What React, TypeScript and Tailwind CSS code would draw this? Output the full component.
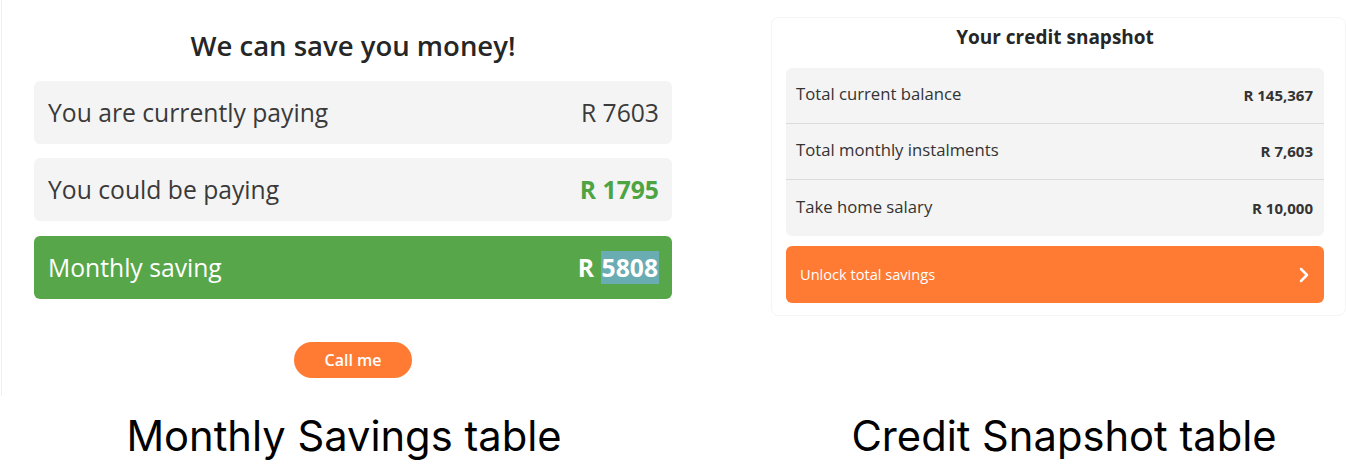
import { ChevronRight } from 'lucide-react';

const open = { fontFamily: '"Open Sans", "Liberation Sans", sans-serif' };
const inter = { fontFamily: 'Inter, "Liberation Sans", sans-serif' };

function SavingRow({ label, value, variant }: { label: string; value: React.ReactNode; variant: 'plain' | 'green' | 'total' }) {
  const box = variant === 'total' ? 'bg-[#58a64a] text-white' : 'bg-[#f4f4f4] text-[#3a3a3a]';
  return (
    <div className={`h-[63px] rounded-[6px] flex items-center justify-between pl-[14px] pr-[13px] text-[24.7px] ${box}`}>
      <span>{label}</span>
      <span className={variant === 'plain' ? '' : variant === 'green' ? 'font-bold text-[#4ea443]' : 'font-bold'}>{value}</span>
    </div>
  );
}

function SnapshotRow({ label, value, last }: { label: string; value: string; last?: boolean }) {
  return (
    <div className={`h-[56px] flex items-center justify-between pl-[10px] pr-[11px] ${last ? '' : 'border-b border-[#dcdcdc]'}`}>
      <span className="text-[16.7px] text-[#333] -mt-[3px]">{label}</span>
      <span className="text-[15px] font-bold text-[#333]">{value}</span>
    </div>
  );
}

export default function App() {
  return (
    <div className="w-[1346px] h-[464px] bg-white flex flex-col overflow-hidden" style={open}>
      <div className="flex items-start h-[396px] shrink-0">
        <div className="ml-[1px] w-[705px] h-[396px] border-l border-[#efefef] pl-[32px] pr-[34px] flex flex-col">
          <h2 className="mt-[28px] h-[36px] text-center text-[27.5px] leading-[36px] font-semibold text-[#262626]">We can save you money!</h2>
          <div className="mt-[17px] flex flex-col gap-[14px]">
            <SavingRow label="You are currently paying" value="R 7603" variant="plain" />
            <SavingRow label="You could be paying" value="R 1795" variant="green" />
            <div className="mt-[1px]">
              <SavingRow
                label="Monthly saving"
                variant="total"
                value={<>R <span className="bg-[#69adb3] px-[1px]">5808</span></>}
              />
            </div>
          </div>
          <div className="mt-[43px] flex justify-center">
            <button className="w-[118px] h-[36px] rounded-full bg-[#ff7b33] text-white text-[16px] font-semibold">Call me</button>
          </div>
        </div>
        <div className="ml-[65px] mt-[17px] w-[575px] h-[299px] rounded-[8px] border border-[#f5f5f5] pl-[14px] pr-[21px] flex flex-col">
          <h3 className="mt-[5px] h-[28px] text-center text-[19px] leading-[28px] font-bold text-[#262626]">Your credit snapshot</h3>
          <div className="mt-[17px] rounded-[6px] bg-[#f4f4f4] flex flex-col">
            <SnapshotRow label="Total current balance" value="R 145,367" />
            <SnapshotRow label="Total monthly instalments" value="R 7,603" />
            <SnapshotRow label="Take home salary" value="R 10,000" last />
          </div>
          <div className="mt-[10px] h-[57px] rounded-[6px] bg-[#ff7b33] text-white flex items-center justify-between pl-[14px] pr-[8px]">
            <span className="text-[14.6px]">Unlock total savings</span>
            <ChevronRight size={24} strokeWidth={2.5} />
          </div>
        </div>
      </div>
      <div className="flex pt-[18px] text-black text-[41.7px] leading-[44px]" style={inter}>
        <div className="w-[688px] text-center">Monthly Savings table</div>
        <div className="w-[658px] text-center pl-[94px]">Credit Snapshot table</div>
      </div>
    </div>
  );
}
